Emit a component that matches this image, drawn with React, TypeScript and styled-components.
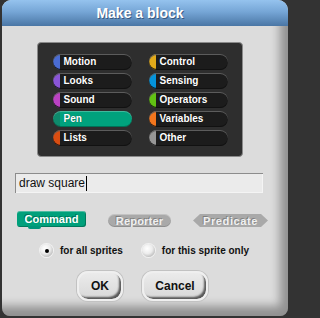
import React from 'react';
import styled, { createGlobalStyle } from 'styled-components';

const Global = createGlobalStyle`
  html, body { margin: 0; padding: 0; background: #333; }
  body {
    width: 288px;
    height: 318px;
    overflow: hidden;
    font-family: "Liberation Sans", Arial, Helvetica, sans-serif;
  }
`;

const Dialog = styled.div`
  margin-left: 2px;
  width: 286px;
  height: 316px;
  display: flex;
  flex-direction: column;
  border-radius: 9px 10px 8px 8px;
  overflow: hidden;
  background: #dcdcdc;
`;

const TitleBar = styled.div`
  height: 26px;
  flex: none;
  display: flex;
  align-items: center;
  justify-content: center;
  padding-right: 10px;
  background: linear-gradient(#95c3ee 0%, #76a6d6 45%, #4a76a5 100%);
  color: #fff;
  font-weight: bold;
  font-size: 14px;
  text-shadow: 1px 1px 0 rgba(20, 40, 70, 0.55);
`;

const Body = styled.div`
  flex: 1;
  display: flex;
  flex-direction: column;
  padding: 0 11px 13px 0;
  box-shadow: inset -13px -15px 10px -5px rgba(0, 0, 0, 0.34);
`;

const Panel = styled.div`
  box-sizing: border-box;
  margin: 16px auto 0;
  width: 206px;
  height: 115px;
  padding: 11px 14px 10px 15px;
  background: #2e2e2e;
  border: 1px solid #8a8a8a;
  border-radius: 4px;
  display: grid;
  grid-auto-flow: column;
  grid-template-rows: repeat(5, 16px);
  grid-template-columns: 79px 79px;
  column-gap: 17px;
  row-gap: 3px;
`;

const CategoryButton = styled.div<{ $color: string; $active?: boolean }>`
  display: flex;
  align-items: center;
  padding-left: 11px;
  border-radius: 8px;
  background: ${(p) =>
    p.$active
      ? `linear-gradient(to right, ${p.$color} 0 7px, #00a27d 7px)`
      : `linear-gradient(to right, ${p.$color} 0 7px, #1c1c1c 7px)`};
  box-shadow: ${(p) =>
    p.$active
      ? 'inset 0 1px 0 rgba(255,255,255,0.25), inset 0 -1px 0 rgba(0,0,0,0.3)'
      : 'inset 0 1px 0 #5c5c5c, inset 0 -1px 0 #111'};
  color: #fff;
  font-size: 10px;
  font-weight: bold;
  line-height: 1;
  text-shadow: 0 0 1px rgba(0, 0, 0, 0.6);
`;

const NameInput = styled.div`
  margin: 16px 14px 0 13px;
  height: 20px;
  flex: none;
  display: flex;
  align-items: center;
  padding-left: 4px;
  background: #ebebeb;
  box-shadow: inset 1px 1px 0 #8c8c8c, inset -1px -1px 0 #f4f4f4;
  font-size: 12px;
  color: #111;
`;

const Caret = styled.span`
  display: inline-block;
  width: 1px;
  height: 15px;
  background: #000;
  margin-left: 1px;
`;

const TypeRow = styled.div`
  margin-top: 19px;
  padding-left: 15px;
  height: 15px;
  display: flex;
  align-items: flex-end;
  gap: 22px;
`;

const CommandBlock = styled.div`
  position: relative;
  width: 69px;
  height: 16px;
  box-sizing: border-box;
  display: flex;
  align-items: center;
  justify-content: center;
  background: #00a07b;
  border-radius: 3px;
  box-shadow: inset 0 1px 0 rgba(255, 255, 255, 0.3), inset -1px -1px 0 rgba(0, 0, 0, 0.25);
  color: #fff;
  font-size: 11px;
  font-weight: bold;
  text-shadow: -1px -1px 0 rgba(0, 0, 0, 0.3);
  &::after {
    content: '';
    position: absolute;
    left: 11px;
    bottom: -2px;
    width: 13px;
    height: 3px;
    background: #00957a;
    border-radius: 0 0 2px 2px;
  }
`;

const ReporterBlock = styled.div`
  width: 63px;
  height: 13px;
  display: flex;
  align-items: center;
  justify-content: center;
  background: #a9a9a9;
  border-radius: 7px;
  box-shadow: inset 0 1px 0 rgba(255, 255, 255, 0.3), inset 0 -1px 0 rgba(0, 0, 0, 0.15);
  color: #f0f0f0;
  font-size: 11px;
  font-weight: bold;
  letter-spacing: 0.2px;
  text-shadow: -1px -1px 0 rgba(0, 0, 0, 0.25);
`;

const PredicateBlock = styled.div`
  width: 75px;
  height: 13px;
  display: flex;
  align-items: center;
  justify-content: center;
  background: #a9a9a9;
  clip-path: polygon(0 50%, 7px 0, calc(100% - 7px) 0, 100% 50%, calc(100% - 7px) 100%, 7px 100%);
  color: #f0f0f0;
  font-size: 11px;
  font-weight: bold;
  letter-spacing: 0.6px;
  text-shadow: -1px -1px 0 rgba(0, 0, 0, 0.25);
`;

const RadioRow = styled.div`
  margin-top: 17px;
  padding-left: 38px;
  display: flex;
  align-items: center;
  height: 13px;
`;

const RadioOption = styled.div<{ $gapAfter?: number }>`
  display: flex;
  align-items: center;
  gap: 7px;
  margin-right: ${(p) => p.$gapAfter ?? 0}px;
  font-size: 10px;
  font-weight: bold;
  color: #111;
`;

const RadioCircle = styled.div`
  width: 13px;
  height: 13px;
  border-radius: 50%;
  display: flex;
  align-items: center;
  justify-content: center;
  background: radial-gradient(circle at 40% 35%, #ffffff 0%, #ececec 45%, #c4c4c4 72%, #7e7e7e 100%);
  box-shadow: 0 0 0 1px rgba(255, 255, 255, 0.6);
`;

const RadioDot = styled.div`
  width: 4px;
  height: 4px;
  border-radius: 50%;
  background: #000;
`;

const ButtonRow = styled.div`
  margin-top: 14px;
  padding-left: 75px;
  display: flex;
  gap: 19px;
`;

const DialogButton = styled.div<{ $width: number }>`
  box-sizing: border-box;
  width: ${(p) => p.$width}px;
  height: 30px;
  display: flex;
  align-items: center;
  justify-content: center;
  border-radius: 11px;
  border: 2px solid #efefef;
  background: linear-gradient(#ebebeb, #d8d8d8);
  box-shadow: inset -3px -3px 2px -1px rgba(0, 0, 0, 0.6), 0 0 0 1px #c2c2c2;
  font-size: 12px;
  font-weight: bold;
  color: #111;
`;

const categories: { name: string; color: string }[] = [
  { name: 'Motion', color: '#4a6cd4' },
  { name: 'Looks', color: '#8a55d7' },
  { name: 'Sound', color: '#bb42c3' },
  { name: 'Pen', color: '#0e8a6c' },
  { name: 'Lists', color: '#d94d11' },
  { name: 'Control', color: '#e1a91a' },
  { name: 'Sensing', color: '#0494dc' },
  { name: 'Operators', color: '#62c213' },
  { name: 'Variables', color: '#f3761d' },
  { name: 'Other', color: '#969696' },
];

export default function App() {
  return (
    <>
      <Global />
      <Dialog>
        <TitleBar>Make a block</TitleBar>
        <Body>
          <Panel>
            {categories.map((c) => (
              <CategoryButton key={c.name} $color={c.color} $active={c.name === 'Pen'}>
                {c.name}
              </CategoryButton>
            ))}
          </Panel>
          <NameInput>
            draw square
            <Caret />
          </NameInput>
          <TypeRow>
            <CommandBlock>Command</CommandBlock>
            <ReporterBlock>Reporter</ReporterBlock>
            <PredicateBlock>Predicate</PredicateBlock>
          </TypeRow>
          <RadioRow>
            <RadioOption $gapAfter={19}>
              <RadioCircle>
                <RadioDot />
              </RadioCircle>
              for all sprites
            </RadioOption>
            <RadioOption>
              <RadioCircle />
              for this sprite only
            </RadioOption>
          </RadioRow>
          <ButtonRow>
            <DialogButton $width={46}>OK</DialogButton>
            <DialogButton $width={66}>Cancel</DialogButton>
          </ButtonRow>
        </Body>
      </Dialog>
    </>
  );
}
